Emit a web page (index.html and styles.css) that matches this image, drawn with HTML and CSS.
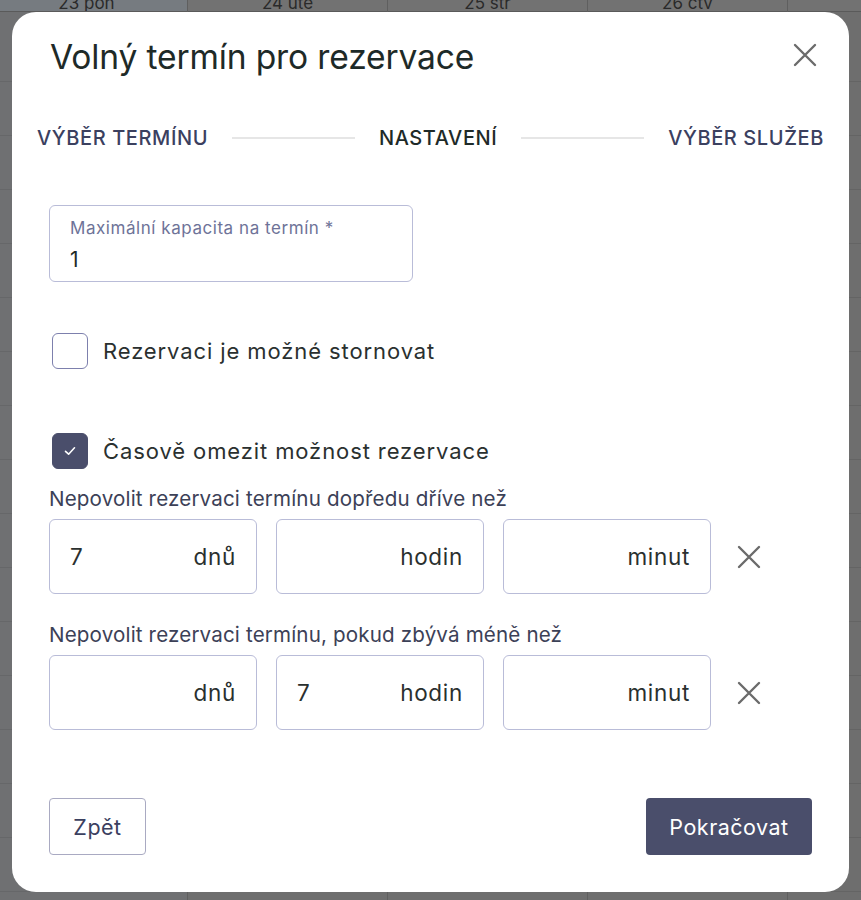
FILE: index.html
```html
<!DOCTYPE html>
<html lang="cs">
<head>
<meta charset="utf-8">
<title>Volný termín pro rezervace</title>
<link rel="stylesheet" href="styles.css">
</head>
<body>
<div class="calendar">
  <div class="cal-col cal-col-today"><div class="cal-head">23 pon</div></div>
  <div class="cal-col"><div class="cal-head">24 úte</div></div>
  <div class="cal-col"><div class="cal-head">25 stř</div></div>
  <div class="cal-col"><div class="cal-head">26 čtv</div></div>
  <div class="cal-col cal-col-last"><div class="cal-head"></div></div>
</div>
<div class="overlay">
  <div class="modal">
    <div class="modal-header">
      <h1 class="modal-title">Volný termín pro rezervace</h1>
      <button class="close-btn" aria-label="Zavřít">
        <svg width="24" height="24" viewBox="0 0 24 24"><path d="M2 2L22 22M22 2L2 22" stroke="#6b6b6b" stroke-width="2.4" fill="none" stroke-linecap="round"/></svg>
      </button>
    </div>
    <div class="stepper">
      <span class="step">VÝBĚR TERMÍNU</span>
      <span class="step-line"></span>
      <span class="step step-active">NASTAVENÍ</span>
      <span class="step-line"></span>
      <span class="step">VÝBĚR SLUŽEB</span>
    </div>
    <div class="field field-capacity">
      <span class="field-label">Maximální kapacita na termín *</span>
      <span class="field-value">1</span>
    </div>
    <label class="check-row check-row-first">
      <span class="checkbox"></span>
      <span class="check-label">Rezervaci je možné stornovat</span>
    </label>
    <label class="check-row check-row-second">
      <span class="checkbox checkbox-on">
        <svg width="16" height="16" viewBox="0 0 16 16"><path d="M3.5 8.3L6.6 11.2L12.5 4.8" stroke="#fff" stroke-width="1.6" fill="none" stroke-linecap="round" stroke-linejoin="round"/></svg>
      </span>
      <span class="check-label">Časově omezit možnost rezervace</span>
    </label>
    <div class="limit">
      <div class="limit-label">Nepovolit rezervaci termínu dopředu dříve než</div>
      <div class="limit-row">
        <div class="unit-box"><span class="unit-val">7</span><span class="unit">dnů</span></div>
        <div class="unit-box"><span class="unit-val"></span><span class="unit">hodin</span></div>
        <div class="unit-box"><span class="unit-val"></span><span class="unit">minut</span></div>
        <button class="remove-btn" aria-label="Odebrat">
          <svg width="24" height="24" viewBox="0 0 24 24"><path d="M2 2L22 22M22 2L2 22" stroke="#6b6b6b" stroke-width="2.4" fill="none" stroke-linecap="round"/></svg>
        </button>
      </div>
    </div>
    <div class="limit limit-second">
      <div class="limit-label">Nepovolit rezervaci termínu, pokud zbývá méně než</div>
      <div class="limit-row">
        <div class="unit-box"><span class="unit-val"></span><span class="unit">dnů</span></div>
        <div class="unit-box"><span class="unit-val">7</span><span class="unit">hodin</span></div>
        <div class="unit-box"><span class="unit-val"></span><span class="unit">minut</span></div>
        <button class="remove-btn" aria-label="Odebrat">
          <svg width="24" height="24" viewBox="0 0 24 24"><path d="M2 2L22 22M22 2L2 22" stroke="#6b6b6b" stroke-width="2.4" fill="none" stroke-linecap="round"/></svg>
        </button>
      </div>
    </div>
    <div class="modal-footer">
      <button class="btn btn-secondary">Zpět</button>
      <button class="btn btn-primary">Pokračovat</button>
    </div>
  </div>
</div>
</body>
</html>
```

FILE: styles.css
```css
* { box-sizing: border-box; }
html, body { margin: 0; padding: 0; }
body {
  width: 861px;
  height: 900px;
  overflow: hidden;
  position: relative;
  font-family: Inter, "Noto Sans", sans-serif;
  background: #6e6e6e;
}
.calendar {
  display: flex;
  width: 861px;
  height: 900px;
  overflow: hidden;
  background-image: repeating-linear-gradient(to bottom, transparent 0, transparent 53px, #646464 53px, #646464 54px);
  background-position: 0 28px;
}
.cal-col {
  width: 200px;
  flex: none;
  border-right: 1px solid #5f5f5f;
  height: 100%;
}
.cal-col-today {
  width: 188px;
  background: rgba(120,135,150,0.12);
}
.cal-col-today .cal-head { padding-right: 14px; }
.cal-col-last {
  border-right: none;
  flex: 1;
  width: auto;
}
.cal-head {
  height: 12px;
  overflow: hidden;
  color: #2a2a2a;
  font-size: 17px;
  line-height: 6px;
  text-align: center;
  border-bottom: 1px solid #5a5a5a;
  background: #727272;
}
.cal-col-today .cal-head { background: #767b80; }
.overlay {
  position: absolute;
  inset: 0;
  padding: 12px 12px 8px 12px;
}
.modal {
  background: #fff;
  border-radius: 24px;
  height: 880px;
  padding: 25px 37px 0 37px;
  display: flex;
  flex-direction: column;
}
.modal-header {
  display: flex;
  justify-content: space-between;
  align-items: flex-start;
  padding-left: 1px;
}
.modal-title {
  margin: 0;
  font-size: 33.6px;
  font-weight: 400;
  color: #1e2a28;
  line-height: 40px;
  letter-spacing: -0.15px;
}
.close-btn, .remove-btn {
  border: none;
  background: none;
  padding: 0;
  cursor: pointer;
  display: flex;
}
.close-btn { margin-top: 6px; margin-right: -5px; }
.stepper {
  display: flex;
  align-items: center;
  margin: 49px -12px 0 -12px;
  gap: 24px;
}
.step {
  font-size: 20px;
  font-weight: 500;
  color: #3b405f;
  white-space: nowrap;
  line-height: 24px;
  letter-spacing: 0.6px;
}
.step-active { color: #1e2a28; }
.step-line {
  flex: 1;
  height: 2px;
  background: #e6e6e6;
}
.field {
  margin-top: 55px;
  width: 364px;
  height: 77px;
  border: 1px solid #b9bcd8;
  border-radius: 6px;
  padding: 11px 20px 0 20px;
  display: flex;
  flex-direction: column;
}
.field-label {
  font-size: 17px;
  color: #6e7398;
  line-height: 22px;
  letter-spacing: 0.55px;
}
.field-value {
  font-size: 21px;
  color: #1e2a28;
  line-height: 26px;
  margin-top: 8px;
}
.check-row {
  display: flex;
  align-items: center;
  gap: 15px;
  padding-left: 3px;
}
.check-row-first { margin-top: 51px; }
.check-row-second { margin-top: 64px; }
.checkbox {
  width: 36px;
  height: 36px;
  border: 1.5px solid #7d80ad;
  border-radius: 6px;
  display: flex;
  align-items: center;
  justify-content: center;
  flex: none;
}
.checkbox-on {
  background: #4a4e6b;
  border-color: #4a4e6b;
}
.check-label {
  font-size: 22px;
  color: #2a302f;
  letter-spacing: 0.9px;
}
.limit { margin-top: 17px; }
.limit-second { margin-top: 28px; }
.limit-label {
  font-size: 20.6px;
  color: #3c4157;
  line-height: 26px;
  letter-spacing: 0.15px;
}
.limit-row {
  margin-top: 7px;
  display: flex;
  align-items: center;
  gap: 19px;
}
.unit-box {
  width: 208px;
  height: 75px;
  border: 1px solid #b9bcd8;
  border-radius: 6px;
  display: flex;
  align-items: center;
  justify-content: space-between;
  padding: 0 20px;
  font-size: 22.5px;
  color: #2a302f;
  letter-spacing: 0.7px;
}
.remove-btn { margin-left: 7px; }
.modal-footer {
  margin-top: auto;
  margin-bottom: 37px;
  display: flex;
  justify-content: space-between;
}
.btn {
  font-family: inherit;
  font-size: 21.5px;
  letter-spacing: 0.5px;
  height: 57px;
  border-radius: 4px;
  cursor: pointer;
  padding: 0;
}
.btn-secondary {
  background: #fff;
  border: 1.5px solid #a9aac2;
  color: #3b405f;
  width: 97px;
}
.btn-primary {
  background: #4a4e6b;
  border: none;
  color: #fff;
  width: 166px;
}
```
